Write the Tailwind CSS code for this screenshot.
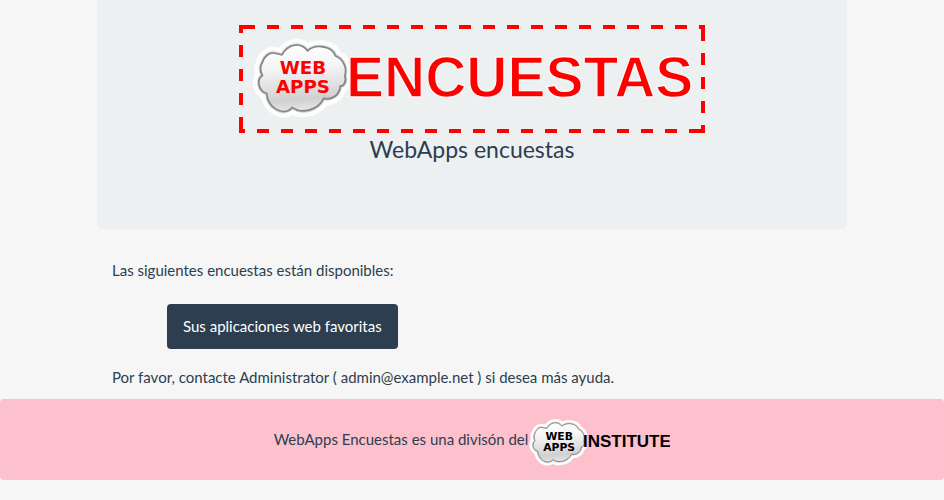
<!DOCTYPE html>
<html lang="es">
<head>
<meta charset="utf-8">
<meta name="viewport" content="width=device-width, initial-scale=1">
<title>WebApps encuestas</title>
<script src="https://cdn.jsdelivr.net/npm/@tailwindcss/browser@4"></script>
</head>
<body class="min-h-screen bg-[#f6f6f6] font-['Lato',sans-serif] text-[15px] leading-[21px] text-[#2c3e50]">
<svg class="absolute size-0" aria-hidden="true">
  <defs>
    <linearGradient id="cloudFill" x1="0.4" y1="0" x2="0.5" y2="1">
      <stop offset="0" stop-color="#ffffff"/>
      <stop offset="0.35" stop-color="#f4f4f4"/>
      <stop offset="0.6" stop-color="#e2e2e2"/>
      <stop offset="0.82" stop-color="#d0d0d0"/>
      <stop offset="1" stop-color="#e8e8e8"/>
    </linearGradient>
    <path id="cloudPath" d="M97 182 C86 165 93 148 97 142 C103 124 118 111 134 115 C142 117 150 118 156 120 C174 86 212 80 233 108 C256 86 306 92 317 123 C342 132 352 163 345 182 C351 200 342 214 331 214 C330 240 306 257 281 251 C266 285 216 300 187 278 C160 308 112 278 110 236 C82 228 80 192 97 182 Z"/>
    <symbol id="cloud" viewBox="66 66 294 250">
      <use href="#cloudPath" fill="#fdfdfd" stroke="#fdfdfd" stroke-width="38" stroke-linejoin="round"/>
      <use href="#cloudPath" fill="none" stroke="#d0d0d0" stroke-width="11" stroke-linejoin="round"/>
      <use href="#cloudPath" fill="url(#cloudFill)" stroke="#858585" stroke-width="5" stroke-linejoin="round"/>
      <g fill="currentColor" font-family="DejaVu Sans, sans-serif" font-weight="700" font-size="55" text-anchor="middle">
        <text x="219" y="178">WEB</text>
        <text x="219" y="234">APPS</text>
      </g>
    </symbol>
  </defs>
</svg>

<div class="mx-auto max-w-[750px]">
  <header class="flex flex-col items-center rounded-b-md bg-[#ecf0f1] px-4 pt-[25px] pb-16">
    <h1>
      <svg class="block h-auto max-w-full text-[#ff0000]" width="466" height="108" viewBox="0 0 466 108" role="img" aria-label="WebApps Encuestas">
        <g fill="none" stroke="#ff0000" stroke-width="4" stroke-dasharray="12 12">
          <path d="M4 2H466"/>
          <path d="M18 106H466"/>
          <path d="M2 20V108"/>
          <path d="M464 4V108"/>
        </g>
        <path fill="#ff0000" d="M0 0h16v4h-12v4h-4zM0 104h6v4h-6zM462 0h4v5h-4zM450 104h16v4h-16z"/>
        <use href="#cloud" x="13" y="12" width="98" height="83"/>
        <text x="107" y="72" font-family="Liberation Sans, Arial, sans-serif" font-weight="700" font-size="57" fill="#ff0000" stroke="#f6f8f8" stroke-width="1.4" stroke-linejoin="round">ENCUESTAS</text>
      </svg>
    </h1>
    <p class="text-center text-[23px] leading-8">WebApps encuestas</p>
  </header>

  <main class="px-[15px] pt-[31px] pb-[11px]">
    <p>Las siguientes encuestas están disponibles:</p>
    <ul class="mt-[23px] mb-[18px] pl-[55px]">
      <li class="flex"><a href="#" class="rounded bg-[#2c3e50] px-4 py-3 text-white">Sus aplicaciones web favoritas</a></li>
    </ul>
    <p>Por favor, contacte Administrator ( <a href="mailto:admin@example.net">admin@example.net</a> ) si desea más ayuda.</p>
  </main>
</div>

<footer class="flex min-h-[81px] flex-wrap items-center justify-center gap-px rounded bg-[#fcc1cc] px-4 py-3">
  <span>WebApps Encuestas es una divisón del</span>
  <svg class="block text-black" width="141" height="55" viewBox="0 0 141 55" role="img" aria-label="WebApps Institute">
    <use href="#cloud" x="0" y="6" width="58" height="49"/>
    <text x="54" y="35" font-family="Liberation Sans, Arial, sans-serif" font-weight="700" font-size="17" fill="#000">INSTITUTE</text>
  </svg>
</footer>
</body>
</html>
